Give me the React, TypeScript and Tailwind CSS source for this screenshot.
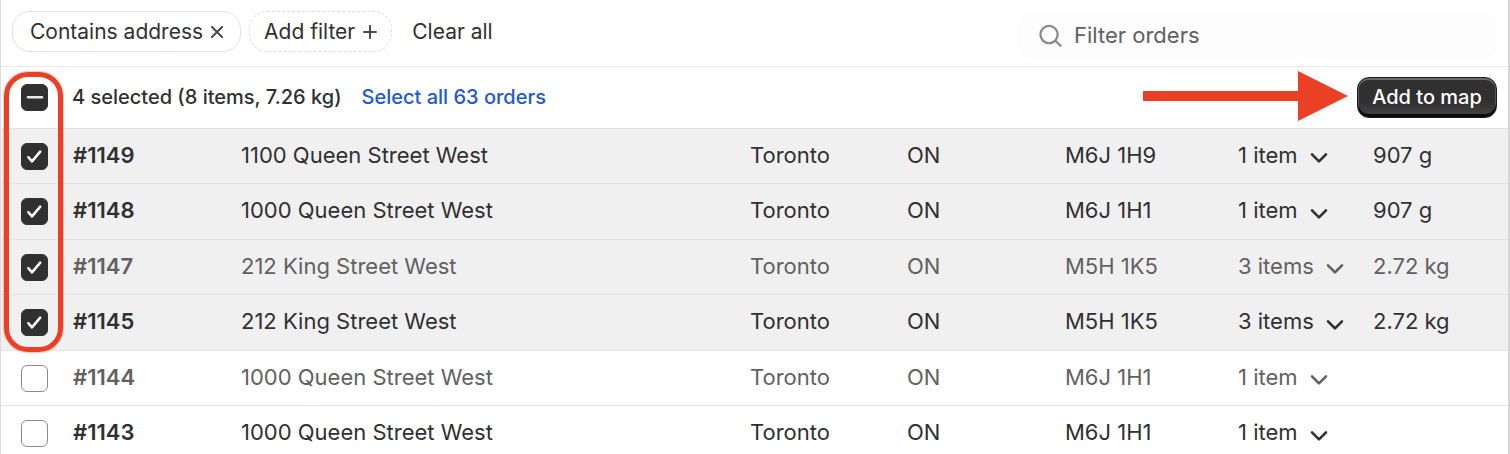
import { useEffect, useRef, useState } from "react";
import clsx from "clsx";

type Order = {
  id: string;
  address: string;
  city: string;
  province: string;
  postal: string;
  items: string;
  weight: string;
  muted?: boolean;
};

const ORDERS: Order[] = [
  { id: "1149", address: "1100 Queen Street West", city: "Toronto", province: "ON", postal: "M6J 1H9", items: "1 item", weight: "907 g" },
  { id: "1148", address: "1000 Queen Street West", city: "Toronto", province: "ON", postal: "M6J 1H1", items: "1 item", weight: "907 g" },
  { id: "1147", address: "212 King Street West", city: "Toronto", province: "ON", postal: "M5H 1K5", items: "3 items", weight: "2.72 kg", muted: true },
  { id: "1145", address: "212 King Street West", city: "Toronto", province: "ON", postal: "M5H 1K5", items: "3 items", weight: "2.72 kg" },
  { id: "1144", address: "1000 Queen Street West", city: "Toronto", province: "ON", postal: "M6J 1H1", items: "1 item", weight: "", muted: true },
  { id: "1143", address: "1000 Queen Street West", city: "Toronto", province: "ON", postal: "M6J 1H1", items: "1 item", weight: "" },
];

function Checkbox({
  label,
  checked,
  indeterminate = false,
  onChange,
}: {
  label: string;
  checked: boolean;
  indeterminate?: boolean;
  onChange: () => void;
}) {
  const ref = useRef<HTMLInputElement>(null);

  useEffect(() => {
    if (ref.current) ref.current.indeterminate = indeterminate;
  }, [indeterminate]);

  const filled = checked || indeterminate;

  return (
    <label className="grid size-[27px] *:col-start-1 *:row-start-1">
      <input
        ref={ref}
        type="checkbox"
        aria-label={label}
        checked={checked}
        onChange={onChange}
        className={clsx(
          "size-[27px] appearance-none rounded-md border",
          filled ? "border-[#303030] bg-[#303030]" : "border-[#8a8a8a] bg-white"
        )}
      />
      {filled && (
        <svg
          viewBox="0 0 27 27"
          className="pointer-events-none size-[27px]"
          fill="none"
          stroke="#fff"
          strokeWidth="2.5"
          strokeLinecap="round"
          strokeLinejoin="round"
        >
          {indeterminate ? <path d="M7 13.2h14" stroke="#e8e8e8" /> : <path d="M7.3 14.2l3.7 4.2 8.2-9.8" />}
        </svg>
      )}
    </label>
  );
}

function Chevron() {
  return (
    <svg
      viewBox="0 0 18 12"
      className="mt-1.5 h-3 w-[18px]"
      fill="none"
      stroke="currentColor"
      strokeWidth="2.6"
      strokeLinecap="round"
      strokeLinejoin="round"
    >
      <path d="M2 2.3l7 7 7-7" />
    </svg>
  );
}

function FilterBar() {
  return (
    <div className="flex items-start justify-between border-b border-[#e7e7e7] pt-[11px] pr-3 pb-[7px] pl-[11px]">
      <div className="flex items-center gap-2 text-[21px] text-[#303030]">
        <button type="button" className="flex h-[41px] items-center gap-2 rounded-[18px] border border-[#e0e0e0] px-[17px]">
          Contains address
          <svg viewBox="0 0 12 12" className="size-3" stroke="#4a4a4a" strokeWidth="2" strokeLinecap="round">
            <path d="M1 1l10 10M11 1L1 11" />
          </svg>
        </button>
        <button type="button" className="flex h-[41px] items-center gap-2 rounded-[18px] border border-dashed border-[#dcdcdc] px-3.5">
          Add filter
          <svg viewBox="0 0 14 14" className="size-3.5" stroke="#4a4a4a" strokeWidth="2" strokeLinecap="round">
            <path d="M7 1v12M1 7h12" />
          </svg>
        </button>
        <button type="button" className="px-3">
          Clear all
        </button>
      </div>
      <label className="flex h-12 w-[477px] items-center gap-3 rounded-xl bg-[#fdfdfd] px-5">
        <svg viewBox="0 0 24 24" className="size-[23px]" fill="none" stroke="#8a8a8a" strokeWidth="2.4" strokeLinecap="round">
          <circle cx="10.5" cy="11" r="9" />
          <path d="M17.2 17.7l5.3 5" />
        </svg>
        <input
          type="search"
          aria-label="Filter orders"
          placeholder="Filter orders"
          className="min-w-0 flex-1 bg-transparent text-[22px] text-[#303030] outline-none placeholder:text-[#616161]"
        />
      </label>
    </div>
  );
}

export default function App() {
  const [selected, setSelected] = useState(["1149", "1148", "1147", "1145"]);
  const all = selected.length === ORDERS.length;

  const toggle = (id: string) =>
    setSelected((prev) => (prev.includes(id) ? prev.filter((x) => x !== id) : [...prev, id]));

  return (
    <main className="overflow-hidden border-r-2 border-l border-r-[#d6d6d6] border-l-[#dcdcdc] bg-white font-['Inter',sans-serif]">
      <FilterBar />
      <section className="relative">
        <div className="flex h-[61px] items-center justify-between pr-[11px] pl-5 text-xl font-medium text-[#303030]">
          <div className="flex items-center gap-6">
            <Checkbox
              label="Select all orders"
              checked={all}
              indeterminate={selected.length > 0 && !all}
              onChange={() => setSelected(all ? [] : ORDERS.map((o) => o.id))}
            />
            <div className="flex gap-5 pb-0.5">
              <span>{selected.length} selected (8 items, 7.26 kg)</span>
              <a href="#all" className="text-[#2358d0]">
                Select all 63 orders
              </a>
            </div>
          </div>
          <div className="flex items-center gap-[9px]">
            <svg viewBox="0 0 205 50" className="mb-1 h-[50px] w-[205px]" fill="#ea4025" aria-hidden="true">
              <path d="M0 20h155V0l50 25-50 25V30H0z" />
            </svg>
            <button
              type="button"
              className="h-[41px] w-[140px] rounded-xl border border-[#1a1a1a] bg-linear-to-b from-[#303030] from-60% to-[#454545] pb-0.5 text-white shadow-[inset_0_-3px_0_#0a0a0a,inset_0_2px_0_#6a6a6a,inset_1px_0_0_#555,inset_-1px_0_0_#555]"
            >
              Add to map
            </button>
          </div>
        </div>

        <table className="w-full table-fixed border-separate border-spacing-0 text-left text-[22px]">
          <colgroup>
            <col className="w-[72px]" />
            <col className="w-[168px]" />
            <col />
            <col className="w-[157px]" />
            <col className="w-[158px]" />
            <col className="w-[173px]" />
            <col className="w-[135px]" />
            <col className="w-[135px]" />
          </colgroup>
          <tbody>
            {ORDERS.map((o) => (
              <tr
                key={o.id}
                className={clsx(
                  "odd:h-[55px] even:h-14 *:border-t *:border-[#e3e3e3] *:px-0 *:pt-0 *:pb-0.5 *:whitespace-nowrap",
                  o.muted ? "text-[#616161]" : "text-[#303030]",
                  selected.includes(o.id) && "bg-[#f0f0f0]"
                )}
              >
                <td>
                  <div className="pt-0.5 pl-5">
                    <Checkbox label={`Select order #${o.id}`} checked={selected.includes(o.id)} onChange={() => toggle(o.id)} />
                  </div>
                </td>
                <th scope="row" className="font-semibold">
                  #{o.id}
                </th>
                <td>{o.address}</td>
                <td>{o.city}</td>
                <td>{o.province}</td>
                <td>{o.postal}</td>
                <td>
                  <button type="button" className="flex items-center gap-3">
                    {o.items}
                    <Chevron />
                  </button>
                </td>
                <td>{o.weight}</td>
              </tr>
            ))}
          </tbody>
        </table>

        {/* callout around the checkbox column */}
        <div className="pointer-events-none absolute top-[5px] left-[3px] h-[280px] w-[59px] rounded-[24px] border-5 border-[#ea4025] ring-1 ring-[#ea4025]/30" />
      </section>
    </main>
  );
}
